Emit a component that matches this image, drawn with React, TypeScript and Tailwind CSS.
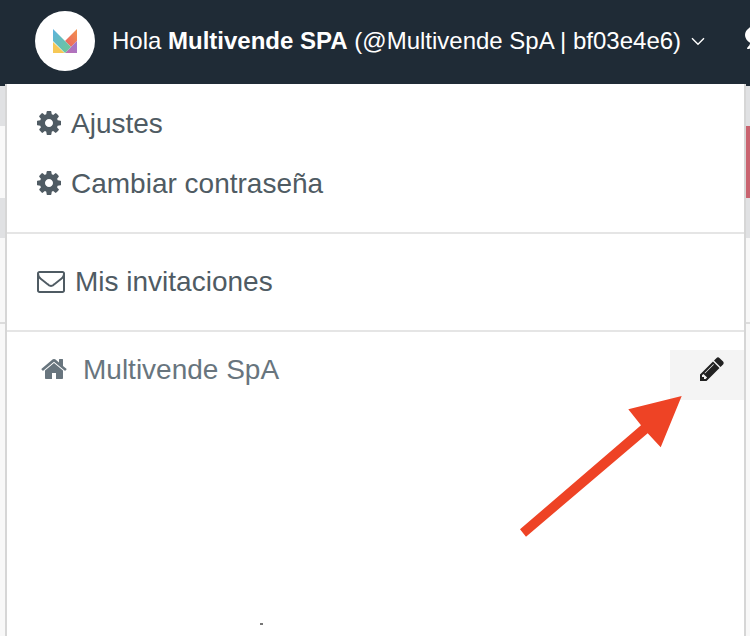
import type { ReactNode } from "react";

const COG =
  "M1152 896q0-106-75-181t-181-75-181 75-75 181 75 181 181 75 181-75 75-181zm512-109v222q0 12-8 23t-20 13l-185 28q-19 54-39 91 35 50 107 138 10 12 10 25t-9 23q-27 37-99 108t-94 71q-12 0-26-9l-138-108q-44 23-91 38-16 136-29 186-7 28-36 28h-222q-14 0-24.5-8.5t-11.5-21.5l-28-184q-49-16-90-37l-141 107q-10 9-25 9-14 0-25-11-126-114-165-168-7-10-7-23 0-12 8-23 15-21 51-66.5t54-70.5q-27-50-41-99l-183-27q-13-2-21-12.5t-8-23.5v-222q0-12 8-23t19-13l186-28q14-46 39-92-40-57-107-138-10-12-10-24 0-10 9-23 26-36 98.5-107.5t94.5-71.5q13 0 26 10l138 107q44-23 91-38 16-136 29-186 7-28 36-28h222q14 0 24.5 8.5t11.5 21.5l28 184q49 16 90 37l142-107q9-9 24-9 13 0 25 10 129 119 165 170 7 8 7 22 0 12-8 23-15 21-51 66.5t-54 70.5q26 50 41 98l183 28q13 2 21 12.5t8 23.5z";
const PENCIL =
  "M491 1536l91-91-235-235-91 91v107h128v128h107zm523-928q0-22-22-22-10 0-17 7l-542 542q-7 7-7 17 0 22 22 22 10 0 17-7l542-542q7-7 7-17zm-54-192l416 416-832 832h-416v-416zm683 96q0 53-37 90l-166 166-416-416 166-165q36-38 90-38 53 0 91 38l235 234q37 39 37 91z";
const HOME =
  "M1472 992v480q0 26-19 45t-45 19h-384v-384h-256v384h-384q-26 0-45-19t-19-45v-480q0-1 .5-3t.5-3l575-474 575 474q1 2 1 6zm223-69l-62 74q-8 9-21 11h-3q-13 0-21-7l-692-577-692 577q-12 8-24 7-13-2-21-11l-62-74q-8-10-7-23.5t11-21.5l719-599q32-26 76-26t76 26l244 204v-195q0-14 9-23t23-9h192q14 0 23 9t9 23v408l219 182q10 8 11 21.5t-7 23.5z";
const ENVELOPE =
  "M1664 1504v-768q-32 36-69 66-268 206-426 338-51 43-83 67t-86.5 48.5-102.5 24.5h-2q-48 0-102.5-24.5t-86.5-48.5-83-67q-158-132-426-338-37-30-69-66v768q0 13 9.5 22.5t22.5 9.5h1472q13 0 22.5-9.5t9.5-22.5zm0-1051v-24.5l-.5-13-3-12.5-5.5-9-9-7.5-14-2.5h-1472q-13 0-22.5 9.5t-9.5 22.5q0 168 147 284 193 152 401 317 6 5 35 29.5t46 37.5 44.5 31.5 50.5 27.5 43 9h2q20 0 43-9t50.5-27.5 44.5-31.5 46-37.5 35-29.5q208-165 401-317 54-43 100.5-115.5t46.5-131.5zm128-37v1088q0 66-47 113t-113 47h-1472q-66 0-113-47t-47-113v-1088q0-66 47-113t113-47h1472q66 0 113 47t47 113z";
const COMMENT =
  "M1792 896q0 174-120 321.5t-326 233-450 85.5q-70 0-145-8-198 175-460 242-49 14-114 22-17 2-30.5-9t-17.5-29v-1q-3-4-.5-12t2-10 4.5-9.5l6-9 7-8.5 8-9q7-8 31-34.5t34.5-38 31-39.5 32.5-51 27-59 26-76q-157-89-247.5-220t-90.5-281q0-130 71-248.5t191-204.5 286-136.5 348-50.5q244 0 450 85.5t326 233 120 321.5z";

function Glyph({ d, w, h, box, className }: { d: string; w: number; h: number; box: string; className?: string }) {
  return (
    <svg className={"shrink-0 " + (className ?? "")} width={w} height={h} viewBox={box} fill="currentColor">
      <path d={d} />
    </svg>
  );
}

function Logo() {
  return (
    <svg width="24" height="24" viewBox="0 0 24 24">
      <defs>
        <linearGradient id="bg" x1="0" y1="0" x2="1" y2="1">
          <stop offset="0" stopColor="#5cb3e0" />
          <stop offset="1" stopColor="#70c98f" />
        </linearGradient>
        <linearGradient id="og" x1="1" y1="0" x2="0" y2="1">
          <stop offset="0" stopColor="#f2934e" />
          <stop offset="1" stopColor="#ea5f63" />
        </linearGradient>
        <linearGradient id="pg" x1="1" y1="0" x2="0" y2="1">
          <stop offset="0" stopColor="#9a78cf" />
          <stop offset="1" stopColor="#c06eb0" />
        </linearGradient>
      </defs>
      <polygon points="0,13 11.5,24 0,24" fill="#f6c856" />
      <polygon points="24,0 24,12 18,18 12,12" fill="url(#og)" />
      <polygon points="24,12 24,24 12,24" fill="url(#pg)" />
      <polygon points="0,0 18,18 12,24 0,12" fill="url(#bg)" />
    </svg>
  );
}

function Row({ children, className }: { children: ReactNode; className: string }) {
  return <div className={"flex items-center h-[60px] text-[#4f5b63] text-[28px] " + className}>{children}</div>;
}

function Band({ h, side, right }: { h: string; side: string; right?: string }) {
  return (
    <div className={"flex justify-between " + h + " " + side}>
      <div className="w-[5px]" />
      <div className={"w-[4px] " + (right ?? "")} />
    </div>
  );
}

export default function App() {
  return (
    <div
      className="relative h-[636px] w-[750px] overflow-hidden bg-[#f8f8f8]"
      style={{ fontFamily: '"Liberation Sans", Arial, sans-serif' }}
    >
      <header className="flex h-[86px] items-start overflow-hidden bg-[#1f2b36] text-white">
        <div className="ml-[35px] mt-[11px] flex h-[60px] w-[60px] shrink-0 items-center justify-center rounded-full bg-white">
          <Logo />
        </div>
        <div className="ml-[17px] mt-[24px] whitespace-nowrap text-[24px] leading-[34px]">
          Hola <b>Multivende SPA</b> (@Multivende SpA | bf03e4e6)
        </div>
        <svg className="ml-[10px] mt-[37px] shrink-0" width="14" height="9" viewBox="0 0 14 9" fill="none" stroke="white" strokeWidth="1.4">
          <path d="M1 1.2 L7 7.2 L13 1.2" />
        </svg>
        <Glyph d={COMMENT} w={28} h={28} box="0 0 1792 1792" className="ml-[40px] mt-[21px]" />
      </header>

      <Band h="h-[40px]" side="bg-[#e0e1e3]" />
      <Band h="h-[72px]" side="bg-[#f9f9f9]" right="bg-[#c9636f]" />
      <Band h="h-[40px]" side="bg-[#e0e1e3]" />
      <div className="h-[84px]" />
      <div className="h-[2px] bg-[#dcdcdc]" />

      <div className="absolute bottom-0 left-[5px] top-[84px] w-[741px] border-x-2 border-[#d6d6d6] bg-white pt-[10px]">
        <Row className="pl-[30px]">
          <Glyph d={COG} w={24} h={24} box="128 128 1536 1536" className="-mt-[2px]" />
          <span className="ml-[10px]">Ajustes</span>
        </Row>
        <Row className="pl-[30px]">
          <Glyph d={COG} w={24} h={24} box="128 128 1536 1536" className="-mt-[2px]" />
          <span className="ml-[10px]">Cambiar contraseña</span>
        </Row>
        <div className="mt-[18px] h-[2px] bg-[#e5e5e5]" />
        <Row className="mt-[18px] pl-[30px]">
          <Glyph d={ENVELOPE} w={28} h={22} box="0 256 1792 1408" />
          <span className="ml-[10px]">Mis invitaciones</span>
        </Row>
        <div className="mt-[18px] h-[2px] bg-[#e5e5e5]" />
        <div className="mt-[18px] flex h-[50px] justify-between">
          <div className="flex h-[40px] items-center pl-[33px] text-[28px] text-[#68757e]">
            <Glyph d={HOME} w={28} h={28} box="0 0 1792 1792" className="-mt-[2px]" />
            <span className="ml-[15px]">Multivende SpA</span>
          </div>
          <div className="w-[74px] bg-[#f4f4f4] pl-[30px] pt-[7px] text-[#222]">
            <Glyph d={PENCIL} w={24} h={24} box="128 128 1536 1536" />
          </div>
        </div>
      </div>

      <div className="absolute left-[260px] top-[623px] h-[2px] w-[3px] bg-[#777]" />

      <svg className="absolute left-0 top-0" width="750" height="636" viewBox="0 0 750 636">
        <polygon
          points="681.7,396 628.3,409.3 641,425.3 520,529.3 526,536.7 647.7,433.3 660.7,447.3"
          fill="#ee4325"
        />
      </svg>
    </div>
  );
}
